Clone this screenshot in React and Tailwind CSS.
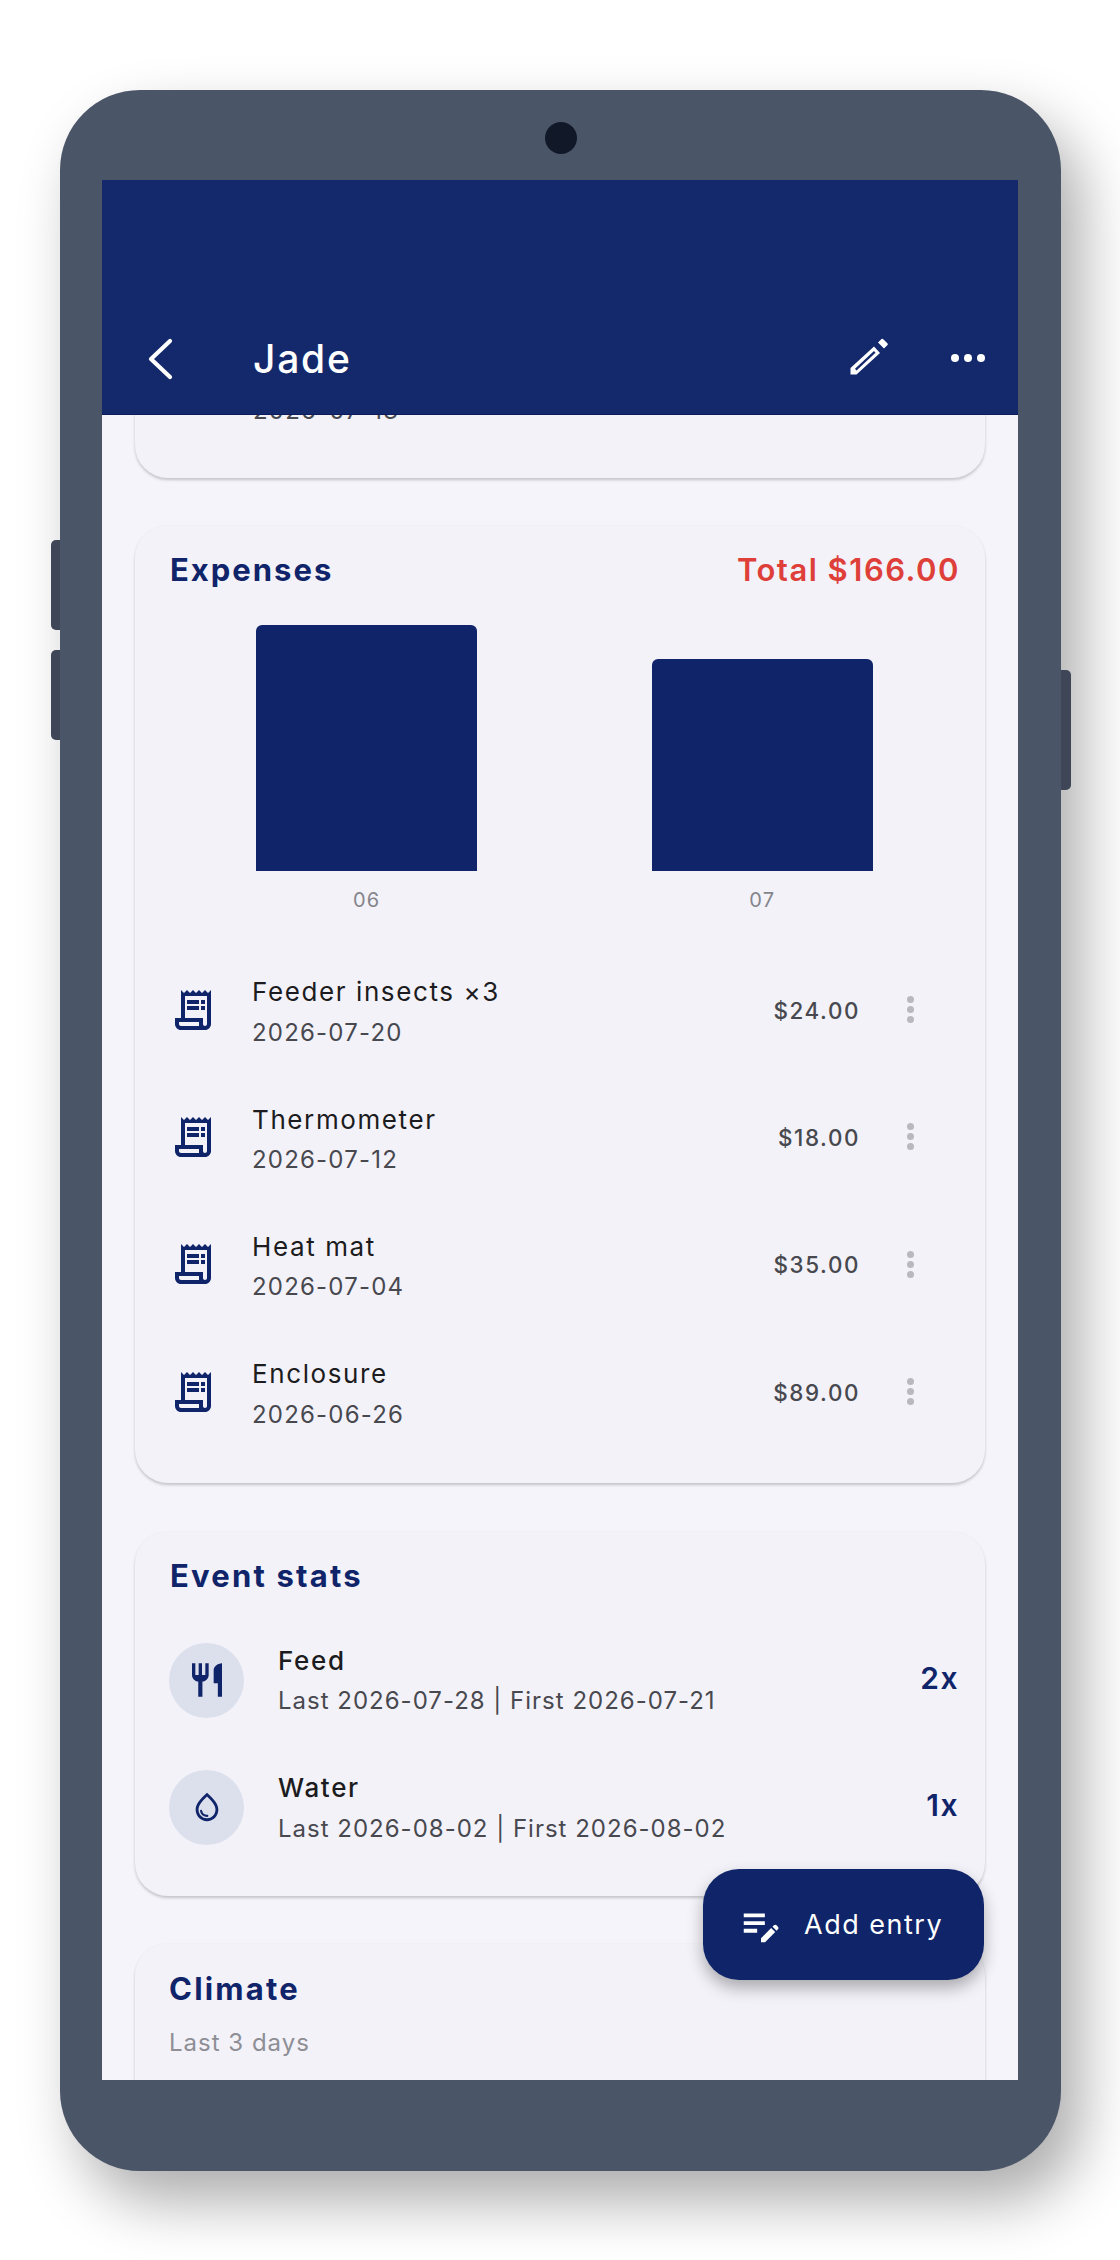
import React from "react";
import { MdOutlineReceiptLong, MdRestaurant, MdOutlineWaterDrop, MdEditNote } from "react-icons/md";

const expenses = [
  { name: "Feeder insects ×3", date: "2026-07-20", amount: "$24.00" },
  { name: "Thermometer", date: "2026-07-12", amount: "$18.00" },
  { name: "Heat mat", date: "2026-07-04", amount: "$35.00" },
  { name: "Enclosure", date: "2026-06-26", amount: "$89.00" },
];

function Dots() {
  return (
    <div className="flex flex-col gap-[3px] items-center w-[50px] mr-[25px]">
      <span className="w-[7px] h-[7px] rounded-full bg-[#b8b8bd]" />
      <span className="w-[7px] h-[7px] rounded-full bg-[#b8b8bd]" />
      <span className="w-[7px] h-[7px] rounded-full bg-[#b8b8bd]" />
    </div>
  );
}

function ExpenseRow({ name, date, amount }) {
  return (
    <div className="flex items-center h-[127.3px]">
      <MdOutlineReceiptLong className="w-[48px] h-[48px] text-[#10246a] shrink-0" />
      <div className="ml-[35px] flex-1 min-w-0 pt-[5px]">
        <div className="text-[26px] leading-[36px] tracking-[1.6px] text-[#1c1c20]">{name}</div>
        <div className="text-[24px] leading-[34px] mt-[5.5px] tracking-[1.2px] text-[#48484f]">{date}</div>
      </div>
      <div className="text-[22.4px] font-medium tracking-[1.6px] text-[#48484f] mr-[25px] pt-[2px]">{amount}</div>
      <Dots />
    </div>
  );
}

function StatRow({ icon, title, sub, count }) {
  return (
    <div className="flex items-center h-[127.3px]">
      <div className="w-[75px] h-[75px] rounded-full bg-[#dcdfec] flex items-center justify-center shrink-0">
        {icon}
      </div>
      <div className="ml-[34px] flex-1 min-w-0 pt-[1px]">
        <div className="text-[26px] leading-[36px] font-medium tracking-[1.7px] text-[#1c1c20]">{title}</div>
        <div className="text-[24px] leading-[34px] mt-[5.5px] tracking-[1px] text-[#48484f]">{sub}</div>
      </div>
      <div className="text-[30px] font-semibold tracking-[1.5px] text-[#10246a] pb-[3px]">{count}</div>
    </div>
  );
}

const card = "rounded-[33px] bg-[#f3f2f9] shadow-[0_2px_3px_rgba(0,0,0,0.2)] border-t border-[#f0f0f6]";

export default function App() {
  return (
    <div className="w-[1120px] h-[2260px] bg-white relative overflow-hidden" style={{ fontFamily: "Inter, sans-serif" }}>
      <div className="pt-[90px] pl-[60px]">
        <div className="relative w-[1001px] h-[2081px] rounded-[80px] bg-[#4a5568] shadow-[20px_30px_60px_rgba(0,0,0,0.33)] pt-[90px] pl-[42px]">
          <div className="absolute left-[-9px] top-[450px] w-[9px] h-[90px] rounded-l-[5px] bg-[#3e4657]" />
          <div className="absolute left-[-9px] top-[560px] w-[9px] h-[90px] rounded-l-[5px] bg-[#3e4657]" />
          <div className="absolute right-[-10px] top-[580px] w-[10px] h-[120px] rounded-r-[5px] bg-[#3e4657]" />
          <div className="absolute left-[485px] top-[32px] w-[32px] h-[32px] rounded-full bg-[#111827]" />

          <div className="relative w-[916px] h-[1900px] bg-[#f4f4fa] overflow-hidden">
            <div className="relative z-10 h-[234px] bg-[#14296c] flex items-end pb-[20.5px] pr-[33px] shadow-[0_1px_0_#0b1c5c]">
              <div className="flex items-center w-full h-[70px]">
                <svg viewBox="0 0 30 44" className="w-[30px] h-[44px] ml-[44px]" fill="none" stroke="white" strokeWidth="4.2" strokeLinecap="round" strokeLinejoin="round">
                  <path d="M24 4 L5 22 L24 40" />
                </svg>
                <div className="ml-[77px] flex-1 text-[39px] font-medium text-white tracking-[1.75px] pt-[2px]">Jade</div>
                <svg viewBox="0 0 40 38" className="w-[40px] h-[38px] mr-[62px] -mt-[4px]" fill="none">
                  <path d="M1.5 36.5 L1.5 30 L25 8.5 L31 15 L7.5 36.5 Z M6 30.8 L7.5 32.5 L26.5 14.8 L25 13 Z" fill="white" fillRule="evenodd" />
                  <path d="M29 4.5 L32.5 1 Q33.2 0.4 34 1 L38.6 5.6 Q39.2 6.4 38.5 7 L35 10.5 Z" fill="white" />
                </svg>
                <svg viewBox="0 0 34 10" className="w-[34px] h-[10px] -mt-[1px]" fill="white">
                  <circle cx="4" cy="5" r="4" /><circle cx="17" cy="5" r="4" /><circle cx="30" cy="5" r="4" />
                </svg>
              </div>
            </div>

            <div className="-mt-[56.5px] px-[33px] flex flex-col gap-[47.5px]">
              <div className={`${card} h-[120px] pl-[118px] pt-[35px]`}>
                <div className="text-[24px] leading-[34px] tracking-[1.2px] text-[#48484f]">2026-07-13</div>
              </div>

              <div className={`${card} h-[958px] pl-[34px] pr-[25px] pt-[24px]`}>
                <div className="flex items-center justify-between h-[40px]">
                  <div className="ml-[1px] text-[31px] font-bold tracking-[2px] text-[#10246a]">Expenses</div>
                  <div className="text-[31px] font-semibold tracking-[1.5px] text-[#de4039]">Total $166.00</div>
                </div>
                <div className="grid grid-cols-2 mt-[35px] h-[246px] items-end">
                  <div className="flex justify-center">
                    <div className="w-[221px] h-[246px] bg-[#10246a] rounded-t-[6px]" />
                  </div>
                  <div className="flex justify-center">
                    <div className="w-[221px] h-[212.5px] bg-[#10246a] rounded-t-[6px]" />
                  </div>
                </div>
                <div className="grid grid-cols-2 mt-[16px]">
                  <div className="text-center text-[20px] leading-[26px] tracking-[1.2px] text-[#85858c]">06</div>
                  <div className="text-center text-[20px] leading-[26px] tracking-[1.2px] text-[#85858c]">07</div>
                </div>
                <div className="mt-[33px]">
                  {expenses.map((e) => <ExpenseRow key={e.name} {...e} />)}
                </div>
              </div>

              <div className={`${card} h-[365px] pl-[34px] pr-[26px] pt-[24px]`}>
                <div className="ml-[1px] text-[31px] leading-[40px] font-bold tracking-[2.2px] text-[#10246a]">Event stats</div>
                <div className="mt-[21px]">
                  <StatRow
                    icon={<MdRestaurant className="w-[40px] h-[40px] text-[#10246a]" />}
                    title="Feed"
                    sub="Last 2026-07-28 | First 2026-07-21"
                    count="2x"
                  />
                  <StatRow
                    icon={<MdOutlineWaterDrop className="w-[34px] h-[34px] text-[#10246a]" />}
                    title="Water"
                    sub="Last 2026-08-02 | First 2026-08-02"
                    count="1x"
                  />
                </div>
              </div>

              <div className={`${card} h-[300px] pl-[34px] pr-[27px] pt-[25px]`}>
                <div className="text-[31px] leading-[40px] font-bold tracking-[2.2px] text-[#10246a]">Climate</div>
                <div className="text-[24px] leading-[34px] mt-[17px] tracking-[1px] text-[#8e8e95]">Last 3 days</div>
              </div>
            </div>

            <div className="absolute z-20 left-[601px] top-[1689px] w-[281px] h-[111px] rounded-[36px] bg-[#0f2469] shadow-[0_8px_16px_rgba(0,0,0,0.3)] flex items-center pl-[35px]">
              <MdEditNote className="w-[46px] h-[46px] text-white" />
              <span className="ml-[20px] text-[27px] tracking-[1.5px] text-white pt-[2px]">Add entry</span>
            </div>
          </div>
        </div>
      </div>
    </div>
  );
}
